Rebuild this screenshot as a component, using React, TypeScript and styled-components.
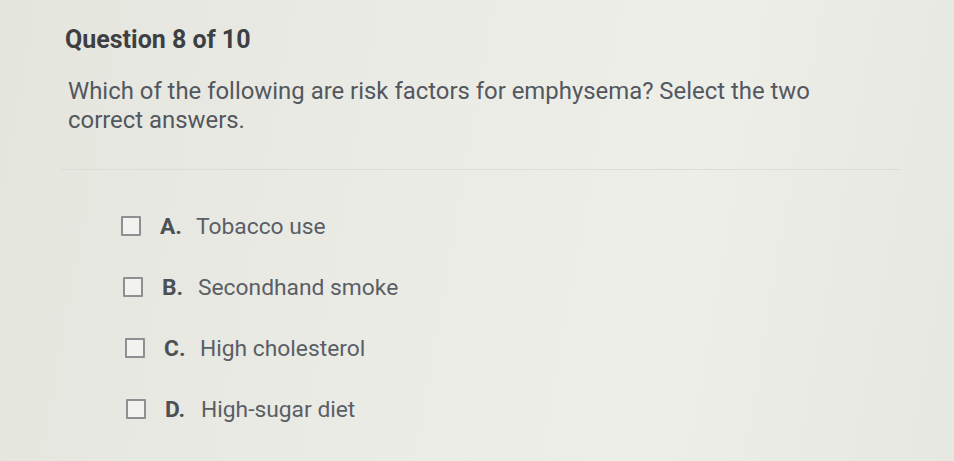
import React from "react";
import styled, { createGlobalStyle } from "styled-components";

const Global = createGlobalStyle`
  html, body { margin: 0; padding: 0; }
  body {
    width: 954px;
    height: 461px;
    overflow: hidden;
    background: linear-gradient(100deg, #e4e5dd 0%, #ebebe6 40%, #eeeee9 70%, #e7e7e2 100%);
    font-family: Roboto, "Liberation Sans", Arial, sans-serif;
  }
`;

const Page = styled.main`
  padding: 25px 54px 0 65px;
  display: flex;
  flex-direction: column;
`;

const Title = styled.h1`
  margin: 0;
  font-size: 25px;
  font-weight: 700;
  color: #3d3f42;
  line-height: 30px;
`;

const Prompt = styled.p`
  margin: 22px 0 0 3px;
  font-size: 23.9px;
  line-height: 29px;
  color: #53575e;
  max-width: 770px;
`;

const Divider = styled.hr`
  margin: 34px 0 0 -5px;
  border: none;
  height: 1px;
  background: #dcddd6;
  width: 840px;
`;

const Options = styled.ul`
  list-style: none;
  margin: 44px 0 0 56px;
  padding: 0;
  display: flex;
  flex-direction: column;
  gap: 37px;
`;

const Option = styled.li<{ $shift: number }>`
  display: flex;
  align-items: center;
  height: 24px;
  margin-left: ${(p) => p.$shift}px;
  color: #5a5e65;
  font-size: 22.8px;
`;

const Box = styled.span`
  width: 20px;
  height: 20px;
  box-sizing: border-box;
  border: 2px solid #8d8f92;
  border-radius: 1px;
  background: #f2f2ef;
  flex: none;
`;

const Letter = styled.span`
  font-weight: 700;
  color: #4c5055;
  margin-left: 19px;
  width: 36px;
`;

const options = [
  { l: "A.", t: "Tobacco use", s: 0 },
  { l: "B.", t: "Secondhand smoke", s: 2 },
  { l: "C.", t: "High cholesterol", s: 4 },
  { l: "D.", t: "High-sugar diet", s: 5 },
];

export default function App() {
  return (
    <>
      <Global />
      <Page>
        <Title>Question 8 of 10</Title>
        <Prompt>
          Which of the following are risk factors for emphysema? Select the two
          correct answers.
        </Prompt>
        <Divider />
        <Options>
          {options.map((o) => (
            <Option key={o.l} $shift={o.s}>
              <Box />
              <Letter>{o.l}</Letter>
              <span>{o.t}</span>
            </Option>
          ))}
        </Options>
      </Page>
    </>
  );
}
